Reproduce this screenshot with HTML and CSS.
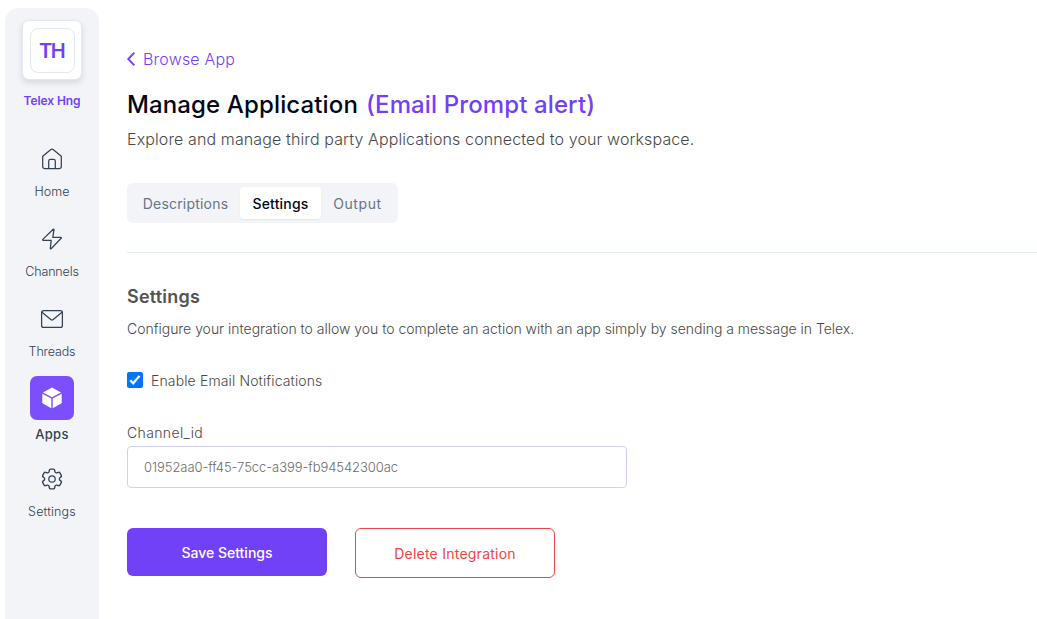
FILE: index.html
```html
<!DOCTYPE html>
<html lang="en">
<head>
<meta charset="utf-8">
<title>Manage Application</title>
<link rel="stylesheet" href="styles.css">
</head>
<body>
<div class="app">
  <aside class="sidebar">
    <div class="logo"><div class="logo-inner"><span class="logo-text">TH</span></div></div>
    <div class="org"><span class="t-org">Telex Hng</span></div>
    <nav class="nav">
      <a class="nav-item">
        <span class="nav-icon"><svg width="22" height="22" viewBox="0 0 22 22"><path d="M1.700 8.300 9.900 1.500q1.100-.9 2.200 0l8.200 6.800v10.300q0 1.900-1.900 1.900H3.600q-1.900 0-1.900-1.900z"/><path d="M7.700 20.400v-7.300q0-1.800 1.800-1.800h3q1.800 0 1.800 1.800v7.300"/></svg></span>
        <span class="nav-label t-home">Home</span>
      </a>
      <a class="nav-item">
        <span class="nav-icon"><svg width="24" height="24" viewBox="0 0 24 24"><path d="M13.200 2.200 2.800 12.400q-.5.800.4 1h8l-.9 8q.1 1 .8.300L21.200 11.300q.5-.8-.4-1h-8l1.200-7.700q-.1-.9-.8-.4z"/></svg></span>
        <span class="nav-label t-channels">Channels</span>
      </a>
      <a class="nav-item">
        <span class="nav-icon"><svg width="24" height="22" viewBox="0 0 24 22"><rect x="1.600" y="2.600" width="20.800" height="16.800" rx="2"/><path d="M2 4.200 10.800 11.600q1.200 .8 2.400 0L22 4.200"/></svg></span>
        <span class="nav-label t-threads">Threads</span>
      </a>
      <a class="nav-item active">
        <span class="nav-icon"><svg width="22" height="22" viewBox="0 0 22 22"><path d="M11 .6 20 5.400 11 10.300 2 5.400zM1.300 6.700 10.300 11.600V21.200L1.800 16.500Q1.300 16.100 1.300 15.500zM20.700 6.700 11.700 11.600V21.200L20.200 16.500Q20.700 16.100 20.700 15.500z"/></svg></span>
        <span class="nav-label t-apps">Apps</span>
      </a>
      <a class="nav-item">
        <span class="nav-icon"><svg width="24" height="24" viewBox="0 0 24 24"><path d="M9.594 3.940c.090-.542.560-.940 1.110-.940h2.593c.550 0 1.020.398 1.110.940l.213 1.281c.063.374.313.686.645.870.074.040.147.083.220.127.325.196.720.257 1.075.124l1.217-.456a1.125 1.125 0 0 1 1.370.490l1.296 2.247a1.125 1.125 0 0 1-.260 1.431l-1.003.827c-.293.241-.438.613-.430.992a7.723 7.723 0 0 1 0 .255c-.008.378.137.750.430.991l1.004.827c.424.350.534.955.260 1.430l-1.298 2.247a1.125 1.125 0 0 1-1.369.491l-1.217-.456c-.355-.133-.750-.072-1.076.124a6.470 6.470 0 0 1-.220.128c-.331.183-.581.495-.644.869l-.213 1.281c-.090.543-.560.940-1.110.940h-2.594c-.550 0-1.019-.398-1.110-.940l-.213-1.281c-.062-.374-.312-.686-.644-.870a6.520 6.520 0 0 1-.220-.127c-.325-.196-.720-.257-1.076-.124l-1.217.456a1.125 1.125 0 0 1-1.369-.490l-1.297-2.247a1.125 1.125 0 0 1 .260-1.431l1.004-.827c.292-.240.437-.613.430-.991a6.932 6.932 0 0 1 0-.255c.007-.380-.138-.751-.430-.992l-1.004-.827a1.125 1.125 0 0 1-.260-1.430l1.297-2.247a1.125 1.125 0 0 1 1.370-.491l1.216.456c.356.133.751.072 1.076-.124.072-.044.146-.086.220-.128.332-.183.582-.495.644-.869z" transform="translate(-1.200 -1.200) scale(1.100)"/><circle cx="12" cy="12" r="3.200"/></svg></span>
        <span class="nav-label t-set">Settings</span>
      </a>
    </nav>
  </aside>
  <main class="main">
    <a class="back"><svg width="8" height="16" viewBox="0 0 8 16"><path d="M7.300 1.700 1.300 8l6 6.300"/></svg><span class="t-back">Browse App</span></a>
    <h1 class="title"><span class="t-title">Manage Application</span><span class="title-app">(Email Prompt alert)</span></h1>
    <p class="lead"><span class="t-lead">Explore and manage third party Applications connected to your workspace.</span></p>
    <div class="tabs">
      <span class="tab tab-desc">Descriptions</span>
      <span class="tab tab-active">Settings</span>
      <span class="tab tab-out">Output</span>
    </div>
    <section class="settings">
      <h2 class="heading"><span class="t-heading">Settings</span></h2>
      <p class="desc"><span class="t-desc">Configure your integration to allow you to complete an action with an app simply by sending a message in Telex.</span></p>
      <div class="check-row"><span class="check"><svg width="16" height="16" viewBox="0 0 16 16"><path d="m3.300 8.300 2.900 3L12.500 3.900"/></svg></span><span class="t-enable">Enable Email Notifications</span></div>
      <div class="field-label"><span class="t-channel-id">Channel_id</span></div>
      <div class="field"><span class="t-value">01952aa0-ff45-75cc-a399-fb94542300ac</span></div>
      <div class="actions">
        <button class="btn save"><span class="t-save">Save Settings</span></button>
        <button class="btn delete"><span class="t-delete">Delete Integration</span></button>
      </div>
    </section>
  </main>
</div>
</body>
</html>
```
FILE: styles.css
```css
* { box-sizing: border-box; }
body { margin: 0; background: #fff; font-family: "Inter", "Liberation Sans", sans-serif; white-space: nowrap; overflow: hidden; }
h1, h2, p { margin: 0; }
svg { display: block; fill: none; stroke: currentColor; stroke-linecap: round; stroke-linejoin: round; }
.app { display: flex; height: 619px; padding: 8px 0 0 5px; }
.sidebar { width: 94px; background: #f2f4f8; border-radius: 14px 14px 0 0; display: flex; flex-direction: column; align-items: center; padding-top: 12px; flex: none; }
.logo { width: 60px; height: 60px; border: 1px solid #e2e8f0; border-radius: 7px; background: #fff; box-shadow: 0 3px 6px rgba(30, 41, 59, .13); display: flex; align-items: center; justify-content: center; }
.logo-inner { width: 45px; height: 45px; border: 1px solid #e2e8f0; border-radius: 8px; display: flex; align-items: center; justify-content: center; padding: 2px 1px 0 0; color: #7141f8; font-size: 20px; font-weight: 600; letter-spacing: -1.5px; }
.org { height: 20px; margin-top: 11px; line-height: 20px; color: #7141f8; font-size: 12px; font-weight: 600; letter-spacing: -.1px; }
.nav { display: flex; flex-direction: column; margin-top: 26px; gap: 15px; width: 100%; }
.nav-item { display: flex; flex-direction: column; align-items: center; gap: 1px; color: #344054; font-size: 12.5px; line-height: 20px; font-weight: 300; }
.nav-icon { width: 44px; height: 44px; display: flex; align-items: center; justify-content: center; border-radius: 7px; }
.nav-icon svg { stroke-width: 1.25; }
.nav-item.active { margin: -1px 0 -2px; gap: 4px; font-weight: 500; font-size: 13px; letter-spacing: .3px; }
.t-channels, .t-threads { letter-spacing: -.15px; }
.t-set { letter-spacing: .15px; }
.active .nav-icon { background: #7b50fc; color: #fff; }
.active svg { fill: currentColor; stroke: none; }
.main { flex: 1; padding-left: 28px; color: #484848; }
.back { display: flex; align-items: center; gap: 8px; height: 24px; margin-top: 39px; color: #7141f8; font-size: 16px; font-weight: 300; letter-spacing: .2px; }
.back svg { stroke-width: 1.9; stroke-linecap: butt; stroke-linejoin: miter; }
.title { display: flex; gap: 8px; height: 32px; margin-top: 18px; line-height: 32px; font-size: 24px; font-weight: 500; color: #020617; letter-spacing: .13px; }
.title-app { color: #7141f8; letter-spacing: .12px; }
.lead { height: 24px; line-height: 24px; margin-top: 6px; font-size: 16px; font-weight: 300; letter-spacing: .115px; }
.tabs { display: flex; width: 271px; height: 40px; margin-top: 32px; padding: 4px; background: #f2f4f8; border-radius: 6px; }
.tab { display: flex; align-items: center; justify-content: center; height: 32px; font-size: 14px; color: #64748b; border-radius: 4px; letter-spacing: .2px; }
.tab-desc { width: 109px; }
.tab-active { width: 81px; background: #fff; color: #020617; font-weight: 500; box-shadow: 0 1px 2px rgba(0, 0, 0, .06); }
.tab-out { width: 73px; letter-spacing: .6px; }
.settings { margin-top: 29px; border-top: 1px solid #e2e8f0; padding-top: 30px; }
.heading { height: 28px; line-height: 28px; font-size: 18px; font-weight: 600; color: #535353; letter-spacing: .2px; }
.desc { height: 20px; line-height: 20px; margin-top: 8px; font-size: 14px; font-weight: 300; letter-spacing: -.022px; }
.check-row { display: flex; align-items: center; gap: 8px; height: 20px; margin-top: 31px; font-size: 14px; font-weight: 300; letter-spacing: .13px; }
.check { width: 16px; height: 16px; background: #0075ff; border-radius: 2px; color: #fff; }
.check svg { stroke-width: 2.2; stroke-linecap: butt; stroke-linejoin: miter; }
.field-label { height: 20px; line-height: 20px; margin-top: 33px; font-size: 14px; font-weight: 300; letter-spacing: .37px; }
.field { width: 500px; height: 42px; margin-top: 3px; border: 1px solid #d0d0fd; border-radius: 4px; padding: 0 0 1px 16px; display: flex; align-items: center; color: #6c6c6c; font-size: 13px; font-weight: 300; letter-spacing: -.07px; }
.actions { display: flex; gap: 28px; margin-top: 40px; }
.btn { width: 200px; height: 48px; padding: 0; border: 0; border-radius: 6px; font: 500 14px "Inter", "Liberation Sans", sans-serif; display: flex; align-items: center; justify-content: center; }
.save { background: #7141f8; color: #fff; }
.delete { height: 50px; border: 1px solid #ef4444; background: #fff; color: #ef4444; font-weight: 400; letter-spacing: .24px; }
```
